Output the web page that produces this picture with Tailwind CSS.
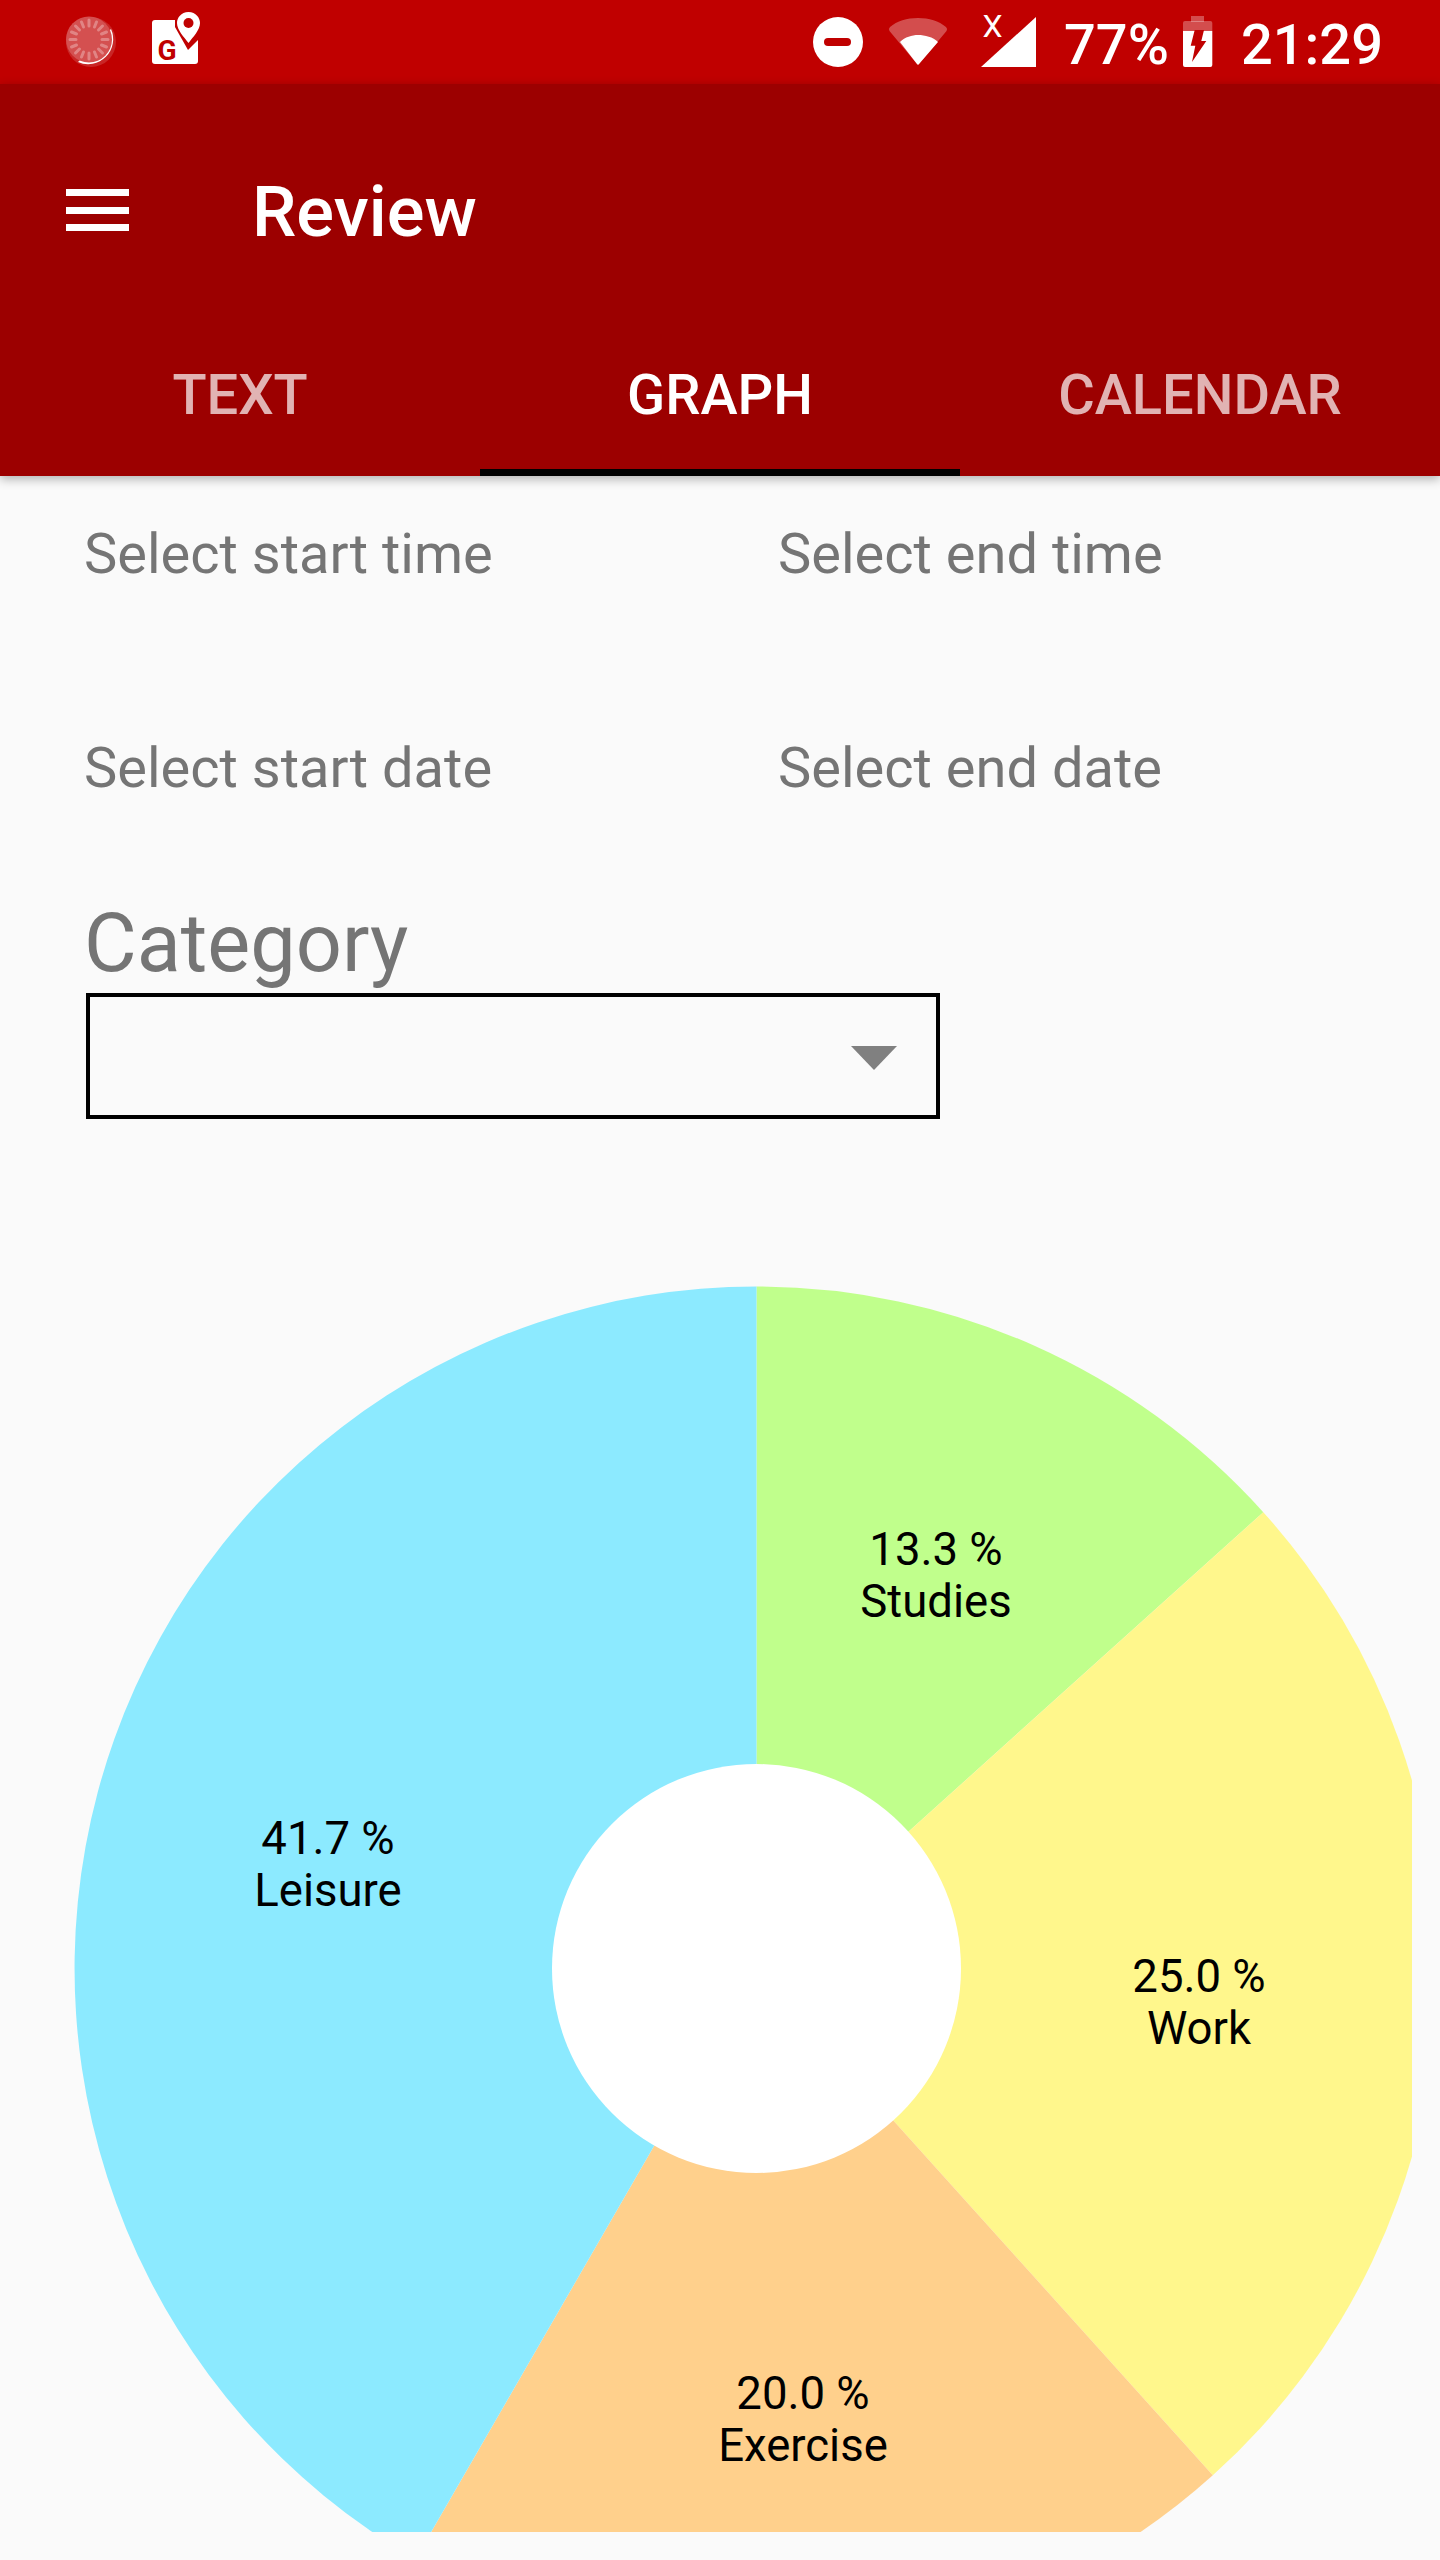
<!DOCTYPE html>
<html lang="en">

<head>
  <meta charset="UTF-8" />
  <meta name="viewport" content="width=device-width, initial-scale=1.0" />
  <script src="https://cdn.jsdelivr.net/npm/@tailwindcss/browser@4"></script>
  <title>Review</title>
</head>

<body class="bg-[#fafafa] font-['Roboto',sans-serif]">
  <div class="w-[1440px] h-[2560px] overflow-hidden">
    <!-- Status bar -->
    <div class="h-[84px] bg-[#c00000] flex items-center text-white">
      <svg class="ml-[64px] w-[54px] h-[54px]" viewBox="0 0 54 54">
        <circle cx="27" cy="27" r="25" fill="#fff" fill-opacity="0.15" />
        <path d="M47 14 A25 25 0 0 1 14 47 Z" fill="#fff" />
        <circle cx="25" cy="24.5" r="23" fill="#d45050" />
        <g stroke="#fff" stroke-opacity="0.3" stroke-width="3" stroke-linecap="round">
          <path d="M25 5v6M25 38v6M6 24.500h6M38 24.500h6M11.500 11l4 4M34.500 34l4 4M11.500 38l4-4M34.500 15l4-4M17.500 7l2 5M30.500 37l2 5M7.500 17l5 2M37.500 30l5 2M7.500 32l5-2M37.500 19l5-2M17.500 42l2-5M30.500 12l2-5" />
        </g>
      </svg>
      <svg class="ml-[32px] w-[52px] h-[60px]" viewBox="0 0 52 60">
        <rect x="2" y="8" width="46" height="44" rx="3" fill="#fff" />
        <path d="M25 8 L25 15 L38 38 L48 28 L48 8 Z" fill="#c00000" />
        <path d="M38.500 0 C31 0 27 6 27 11 C27 18 34 25 38.500 31 C43 25 50 18 50 11 C50 6 46 0 38.500 0Z" fill="#fff" />
        <circle cx="38.500" cy="11" r="5" fill="#c00000" />
        <text x="17" y="47.500" text-anchor="middle" font-size="28" font-weight="700" fill="#c00000">G</text>
      </svg>
      <svg class="ml-[611px] w-[50px] h-[50px]" viewBox="0 0 50 50">
        <circle cx="25" cy="25" r="25" fill="#fff" />
        <rect x="11" y="21" width="27" height="8" rx="4" fill="#c00000" />
      </svg>
      <svg class="ml-[25px] w-[62px] h-[50px]" viewBox="0 0 62 50">
        <path d="M30 1 C19 1 9 4 2 10 Q0 12 1.500 14 L29 47 Q30 48.500 31 47 L58.500 14 Q60 12 58 10 C51 4 41 1 30 1Z" fill="#fff" fill-opacity="0.3" />
        <path d="M12 25 C17 20 24 18 30 18 C37 18 45 20 50 25 L31 47 Q30 48.500 29 47Z" fill="#fff" />
      </svg>
      <svg class="ml-[30px] w-[58px] h-[72px]" viewBox="0 0 58 72">
        <path d="M56 11 V61 H1 Z" fill="#fff" />
        <text x="12.500" y="31" text-anchor="middle" font-size="32" fill="#fff">X</text>
      </svg>
      <span class="ml-[26px] pt-[5px] text-[56px] leading-none font-medium">77%</span>
      <svg class="ml-[14px] w-[30px] h-[52px]" viewBox="0 0 30 52">
        <rect x="8" y="0" width="13" height="6" fill="#fff" fill-opacity="0.3" />
        <path d="M2 5 H27.300 Q29.300 5 29.300 7 V15 H0 V7 Q0 5 2 5Z" fill="#fff" fill-opacity="0.3" />
        <path d="M0 15 H29.300 V49 Q29.300 51 27.300 51 H2 Q0 51 0 49Z" fill="#fff" />
        <path d="M11.700 14 H21 L18.300 25 H23.300 L9 46 L12.300 29.700 H7.700Z" fill="#c00000" />
      </svg>
      <span class="ml-[28px] pt-[5px] text-[56px] leading-none font-medium">21:29</span>
    </div>

    <!-- App bar -->
    <div class="h-[392px] bg-[#9c0000] relative shadow-[0_3px_10px_rgba(0,0,0,0.3)] flex flex-col">
      <div class="h-[252px] flex items-start pt-[105px]">
        <div class="ml-[66px] w-[63px] flex flex-col gap-[10.5px]">
          <div class="h-[7px] bg-white"></div>
          <div class="h-[7px] bg-white"></div>
          <div class="h-[7px] bg-white"></div>
        </div>
        <h1 class="ml-[123px] text-[70.5px] leading-[70px] font-medium text-white -mt-[12px]">Review</h1>
      </div>
      <div class="grid grid-cols-3 w-[1440px] h-[140px] text-[56px] font-medium text-center">
        <div class="text-white/70 pt-[24px] leading-[70px]">TEXT</div>
        <div class="text-white pt-[24px] leading-[70px] border-b-[7px] border-black">GRAPH</div>
        <div class="text-white/70 pt-[24px] leading-[70px]">CALENDAR</div>
      </div>
    </div>

    <!-- Filters -->
    <div class="grid grid-cols-[694px_1fr] pl-[84px] text-[56px] leading-[64px] text-[#757575] pt-[46px]">
      <div class="h-[214px]">Select start time</div>
      <div>Select end time</div>
      <div class="h-[150px]">Select start date</div>
      <div>Select end date</div>
    </div>
    <div class="pl-[84px] mt-[13px] text-[81px] leading-[90px] text-[#757575]">Category</div>
    <div class="ml-[86px] mt-[4px] w-[854px] h-[126px] border-4 border-black flex items-center justify-end pr-[39px]">
      <div class="w-0 h-0 border-x-[23px] border-x-transparent border-t-[24px] border-t-[#808080] mt-[4px]"></div>
    </div>

    <!-- Pie chart -->
    <svg class="block mt-[100px]" width="1412" height="1313" viewBox="0 1219 1412 1313">
      <path d="M756.500 1968.500 L756.500 1286.500 A682 682 0 0 1 1263.300 1512.200 Z" fill="#c0ff8c" />
      <path d="M756.500 1968.500 L1263.300 1512.200 A682 682 0 0 1 1212.800 2475.300 Z" fill="#fff78c" />
      <path d="M756.500 1968.500 L1212.800 2475.300 A682 682 0 0 1 415.500 2559.100 Z" fill="#ffd08c" />
      <path d="M756.500 1968.500 L415.500 2559.100 A682 682 0 0 1 756.500 1286.500 Z" fill="#8ceaff" />
      <circle cx="756.500" cy="1968.500" r="204.500" fill="#fff" />
      <g font-size="45.500" text-anchor="middle" fill="#000">
        <text x="936" y="1565">13.3 %</text>
        <text x="936" y="1617">Studies</text>
        <text x="328" y="1854">41.7 %</text>
        <text x="328" y="1906">Leisure</text>
        <text x="1199" y="1992">25.0 %</text>
        <text x="1199" y="2044">Work</text>
        <text x="803" y="2409">20.0 %</text>
        <text x="803" y="2461">Exercise</text>
      </g>
    </svg>
  </div>
</body>

</html>
